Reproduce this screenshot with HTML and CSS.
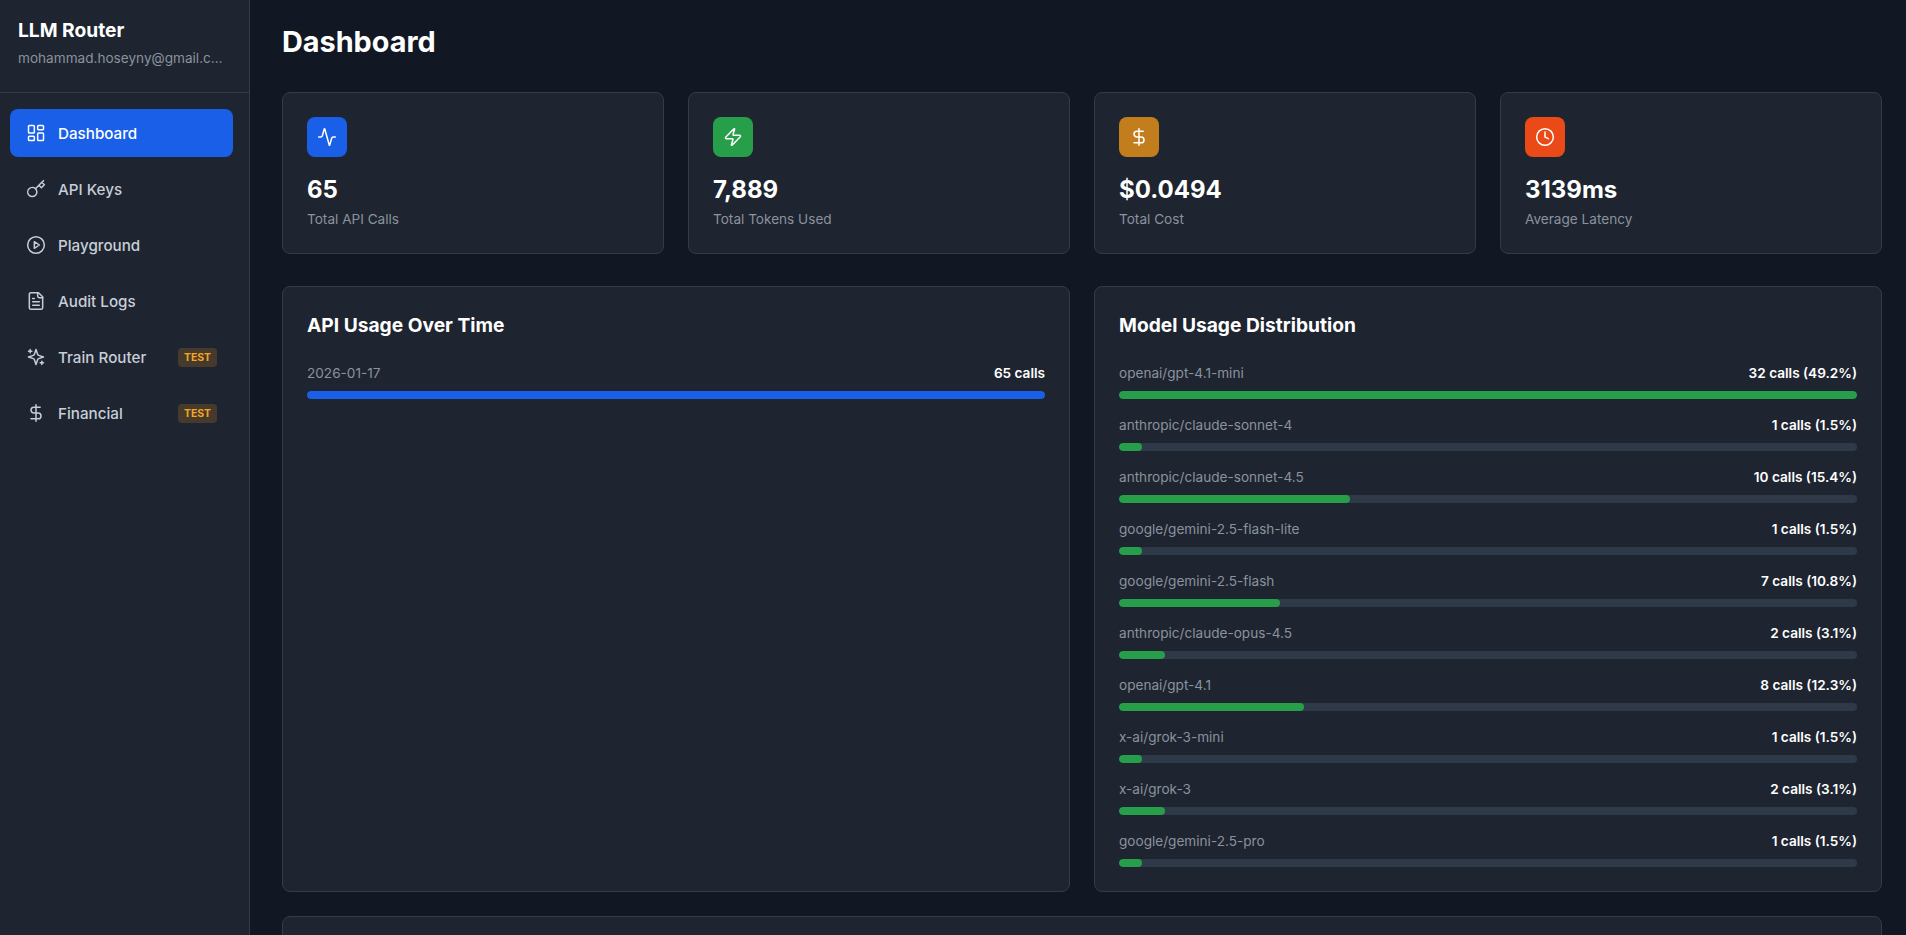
FILE: index.html
```html
<!DOCTYPE html>
<html lang="en">
<head>
<meta charset="utf-8">
<title>LLM Router - Dashboard</title>
<link rel="stylesheet" href="styles.css">
</head>
<body>
<div class="app">
  <aside class="sidebar">
    <div class="brand">
      <div class="brand-name">LLM Router</div>
      <div class="brand-email">mohammad.hoseyny@gmail.com</div>
    </div>
    <nav class="nav">
      <a class="nav-item active">
        <svg class="icon" viewBox="0 0 24 24"><rect x="3" y="3" width="7" height="9" rx="1"/><rect x="14" y="3" width="7" height="5" rx="1"/><rect x="14" y="12" width="7" height="9" rx="1"/><rect x="3" y="16" width="7" height="5" rx="1"/></svg>
        <span>Dashboard</span>
      </a>
      <a class="nav-item">
        <svg class="icon" viewBox="0 0 24 24"><path d="m21 2-2 2m-7.61 7.61a5.5 5.5 0 1 1-7.778 7.778 5.5 5.5 0 0 1 7.777-7.777zm0 0L15.5 7.5m0 0 3 3L22 7l-3-3m-3.5 3.5L19 4"/></svg>
        <span>API Keys</span>
      </a>
      <a class="nav-item">
        <svg class="icon" viewBox="0 0 24 24"><circle cx="12" cy="12" r="10"/><polygon points="10 8 16 12 10 16 10 8"/></svg>
        <span>Playground</span>
      </a>
      <a class="nav-item">
        <svg class="icon" viewBox="0 0 24 24"><path d="M15 2H6a2 2 0 0 0-2 2v16a2 2 0 0 0 2 2h12a2 2 0 0 0 2-2V7Z"/><path d="M14 2v4a2 2 0 0 0 2 2h4"/><path d="M10 9H8"/><path d="M16 13H8"/><path d="M16 17H8"/></svg>
        <span>Audit Logs</span>
      </a>
      <a class="nav-item">
        <svg class="icon" viewBox="0 0 24 24"><path d="m12 3-1.912 5.813a2 2 0 0 1-1.275 1.275L3 12l5.813 1.912a2 2 0 0 1 1.275 1.275L12 21l1.912-5.813a2 2 0 0 1 1.275-1.275L21 12l-5.813-1.912a2 2 0 0 1-1.275-1.275L12 3Z"/><path d="M5 3v4"/><path d="M19 17v4"/><path d="M3 5h4"/><path d="M17 19h4"/></svg>
        <span>Train Router</span>
        <span class="badge">TEST</span>
      </a>
      <a class="nav-item">
        <svg class="icon" viewBox="0 0 24 24"><line x1="12" y1="2" x2="12" y2="22"/><path d="M17 5H9.5a3.5 3.5 0 0 0 0 7h5a3.5 3.5 0 0 1 0 7H6"/></svg>
        <span>Financial</span>
        <span class="badge">TEST</span>
      </a>
    </nav>
  </aside>
  <main class="main">
    <h1 class="page-title">Dashboard</h1>
    <section class="stats">
      <div class="card stat">
        <div class="stat-icon blue"><svg class="icon" viewBox="0 0 24 24"><path d="M22 12h-2.48a2 2 0 0 0-1.93 1.46l-2.35 8.36a.25.25 0 0 1-.48 0L9.24 2.18a.25.25 0 0 0-.48 0l-2.35 8.36A2 2 0 0 1 4.49 12H2"/></svg></div>
        <div class="stat-value">65</div>
        <div class="stat-label">Total API Calls</div>
      </div>
      <div class="card stat">
        <div class="stat-icon green"><svg class="icon" viewBox="0 0 24 24"><path d="M4 14a1 1 0 0 1-.78-1.63l9.9-10.2a.5.5 0 0 1 .86.46l-1.92 6.02A1 1 0 0 0 13 10h7a1 1 0 0 1 .78 1.63l-9.9 10.2a.5.5 0 0 1-.86-.46l1.92-6.02A1 1 0 0 0 11 14z"/></svg></div>
        <div class="stat-value">7,889</div>
        <div class="stat-label">Total Tokens Used</div>
      </div>
      <div class="card stat">
        <div class="stat-icon amber"><svg class="icon" viewBox="0 0 24 24"><line x1="12" y1="2" x2="12" y2="22"/><path d="M17 5H9.5a3.5 3.5 0 0 0 0 7h5a3.5 3.5 0 0 1 0 7H6"/></svg></div>
        <div class="stat-value">$0.0494</div>
        <div class="stat-label">Total Cost</div>
      </div>
      <div class="card stat">
        <div class="stat-icon red"><svg class="icon" viewBox="0 0 24 24"><circle cx="12" cy="12" r="10"/><polyline points="12 6 12 12 16 14"/></svg></div>
        <div class="stat-value">3139ms</div>
        <div class="stat-label">Average Latency</div>
      </div>
    </section>
    <section class="charts">
      <div class="card chart">
        <h2 class="chart-title">API Usage Over Time</h2>
        <div class="rows">
          <div class="row">
            <div class="row-head"><span class="row-name">2026-01-17</span><span class="row-value">65 calls</span></div>
            <div class="track"><div class="fill fill-blue" style="width:100%"></div></div>
          </div>
        </div>
      </div>
      <div class="card chart">
        <h2 class="chart-title">Model Usage Distribution</h2>
        <div class="rows">
          <div class="row">
            <div class="row-head"><span class="row-name">openai/gpt-4.1-mini</span><span class="row-value">32 calls (49.2%)</span></div>
            <div class="track"><div class="fill" style="width:100%"></div></div>
          </div>
          <div class="row">
            <div class="row-head"><span class="row-name">anthropic/claude-sonnet-4</span><span class="row-value">1 calls (1.5%)</span></div>
            <div class="track"><div class="fill" style="width:3.125%"></div></div>
          </div>
          <div class="row">
            <div class="row-head"><span class="row-name">anthropic/claude-sonnet-4.5</span><span class="row-value">10 calls (15.4%)</span></div>
            <div class="track"><div class="fill" style="width:31.25%"></div></div>
          </div>
          <div class="row">
            <div class="row-head"><span class="row-name">google/gemini-2.5-flash-lite</span><span class="row-value">1 calls (1.5%)</span></div>
            <div class="track"><div class="fill" style="width:3.125%"></div></div>
          </div>
          <div class="row">
            <div class="row-head"><span class="row-name">google/gemini-2.5-flash</span><span class="row-value">7 calls (10.8%)</span></div>
            <div class="track"><div class="fill" style="width:21.875%"></div></div>
          </div>
          <div class="row">
            <div class="row-head"><span class="row-name">anthropic/claude-opus-4.5</span><span class="row-value">2 calls (3.1%)</span></div>
            <div class="track"><div class="fill" style="width:6.25%"></div></div>
          </div>
          <div class="row">
            <div class="row-head"><span class="row-name">openai/gpt-4.1</span><span class="row-value">8 calls (12.3%)</span></div>
            <div class="track"><div class="fill" style="width:25%"></div></div>
          </div>
          <div class="row">
            <div class="row-head"><span class="row-name">x-ai/grok-3-mini</span><span class="row-value">1 calls (1.5%)</span></div>
            <div class="track"><div class="fill" style="width:3.125%"></div></div>
          </div>
          <div class="row">
            <div class="row-head"><span class="row-name">x-ai/grok-3</span><span class="row-value">2 calls (3.1%)</span></div>
            <div class="track"><div class="fill" style="width:6.25%"></div></div>
          </div>
          <div class="row">
            <div class="row-head"><span class="row-name">google/gemini-2.5-pro</span><span class="row-value">1 calls (1.5%)</span></div>
            <div class="track"><div class="fill" style="width:3.125%"></div></div>
          </div>
        </div>
      </div>
    </section>
    <section class="card next-card"></section>
  </main>
</div>
</body>
</html>
```

FILE: styles.css
```css
* { box-sizing: border-box; }
html, body { margin: 0; height: 100%; overflow: hidden; }
body {
  font-family: Inter, "Liberation Sans", sans-serif;
  background: #111824;
  color: #fff;
}
.app { display: flex; height: 100vh; }

.sidebar {
  width: 250px;
  flex: none;
  background: #1e2530;
  border-right: 1px solid #323b49;
  display: flex;
  flex-direction: column;
}
.brand {
  height: 93px;
  padding: 19px 18px 0;
  border-bottom: 1px solid #323b49;
}
.brand-name { font-size: 19.2px; font-weight: 700; line-height: 23px; }
.brand-email {
  margin-top: 6px;
  max-width: 208px;
  font-size: 13.6px;
  line-height: 20px;
  color: #8b929e;
  white-space: nowrap;
  overflow: hidden;
  text-overflow: ellipsis;
}
.nav { padding: 16px 16px 16px 10px; display: flex; flex-direction: column; gap: 8px; }
.nav-item {
  display: flex;
  align-items: center;
  gap: 12px;
  height: 48px;
  padding: 0 16px;
  border-radius: 8px;
  font-size: 15.2px;
  font-weight: 500;
  color: #c8ced8;
}
.nav-item.active { background: #1a5fe8; color: #fff; }
.icon {
  width: 20px;
  height: 20px;
  flex: none;
  fill: none;
  stroke: currentColor;
  stroke-width: 1.8;
  stroke-linecap: round;
  stroke-linejoin: round;
}
.badge {
  margin-left: auto;
  padding: 0 6px;
  height: 19px;
  line-height: 19px;
  border-radius: 4px;
  background: #463a2d;
  color: #f5a623;
  font-size: 10.4px;
  font-weight: 700;
}

.main { flex: 1; min-width: 0; padding: 24px 24px 24px 32px; overflow: hidden; }
.page-title { margin: 0 0 32px; font-size: 28.8px; font-weight: 700; line-height: 36px; }

.card { background: #1e2530; border: 1px solid #323b49; border-radius: 8px; padding: 24px; }

.stats { display: grid; grid-template-columns: repeat(4, 1fr); gap: 24px; margin-bottom: 32px; }
.stat-icon {
  width: 40px;
  height: 40px;
  border-radius: 8px;
  display: flex;
  align-items: center;
  justify-content: center;
  margin-bottom: 16px;
}
.blue { background: #1a5fe8; }
.green { background: #279e4a; }
.amber { background: #c27e1c; }
.red { background: #ea4a18; }
.stat-value { font-size: 24px; font-weight: 700; line-height: 34px; }
.stat-label { margin-top: 3px; font-size: 13.6px; line-height: 18.5px; color: #8b929e; }

.charts { display: grid; grid-template-columns: repeat(2, 1fr); gap: 24px; margin-bottom: 24px; }
.chart-title { margin: 0 0 24px; font-size: 19.2px; font-weight: 700; line-height: 28px; }
.rows { display: flex; flex-direction: column; gap: 16px; }
.row-head {
  display: flex;
  justify-content: space-between;
  font-size: 13.6px;
  line-height: 20px;
  margin-bottom: 8px;
}
.row-name { color: #8b929e; }
.row-value { color: #fff; font-weight: 600; }
.track { height: 8px; border-radius: 4px; background: #2f3a49; overflow: hidden; }
.fill { height: 100%; border-radius: 4px; background: #279e4a; }
.fill-blue { background: #1a5fe8; }
.next-card { height: 200px; }
```
